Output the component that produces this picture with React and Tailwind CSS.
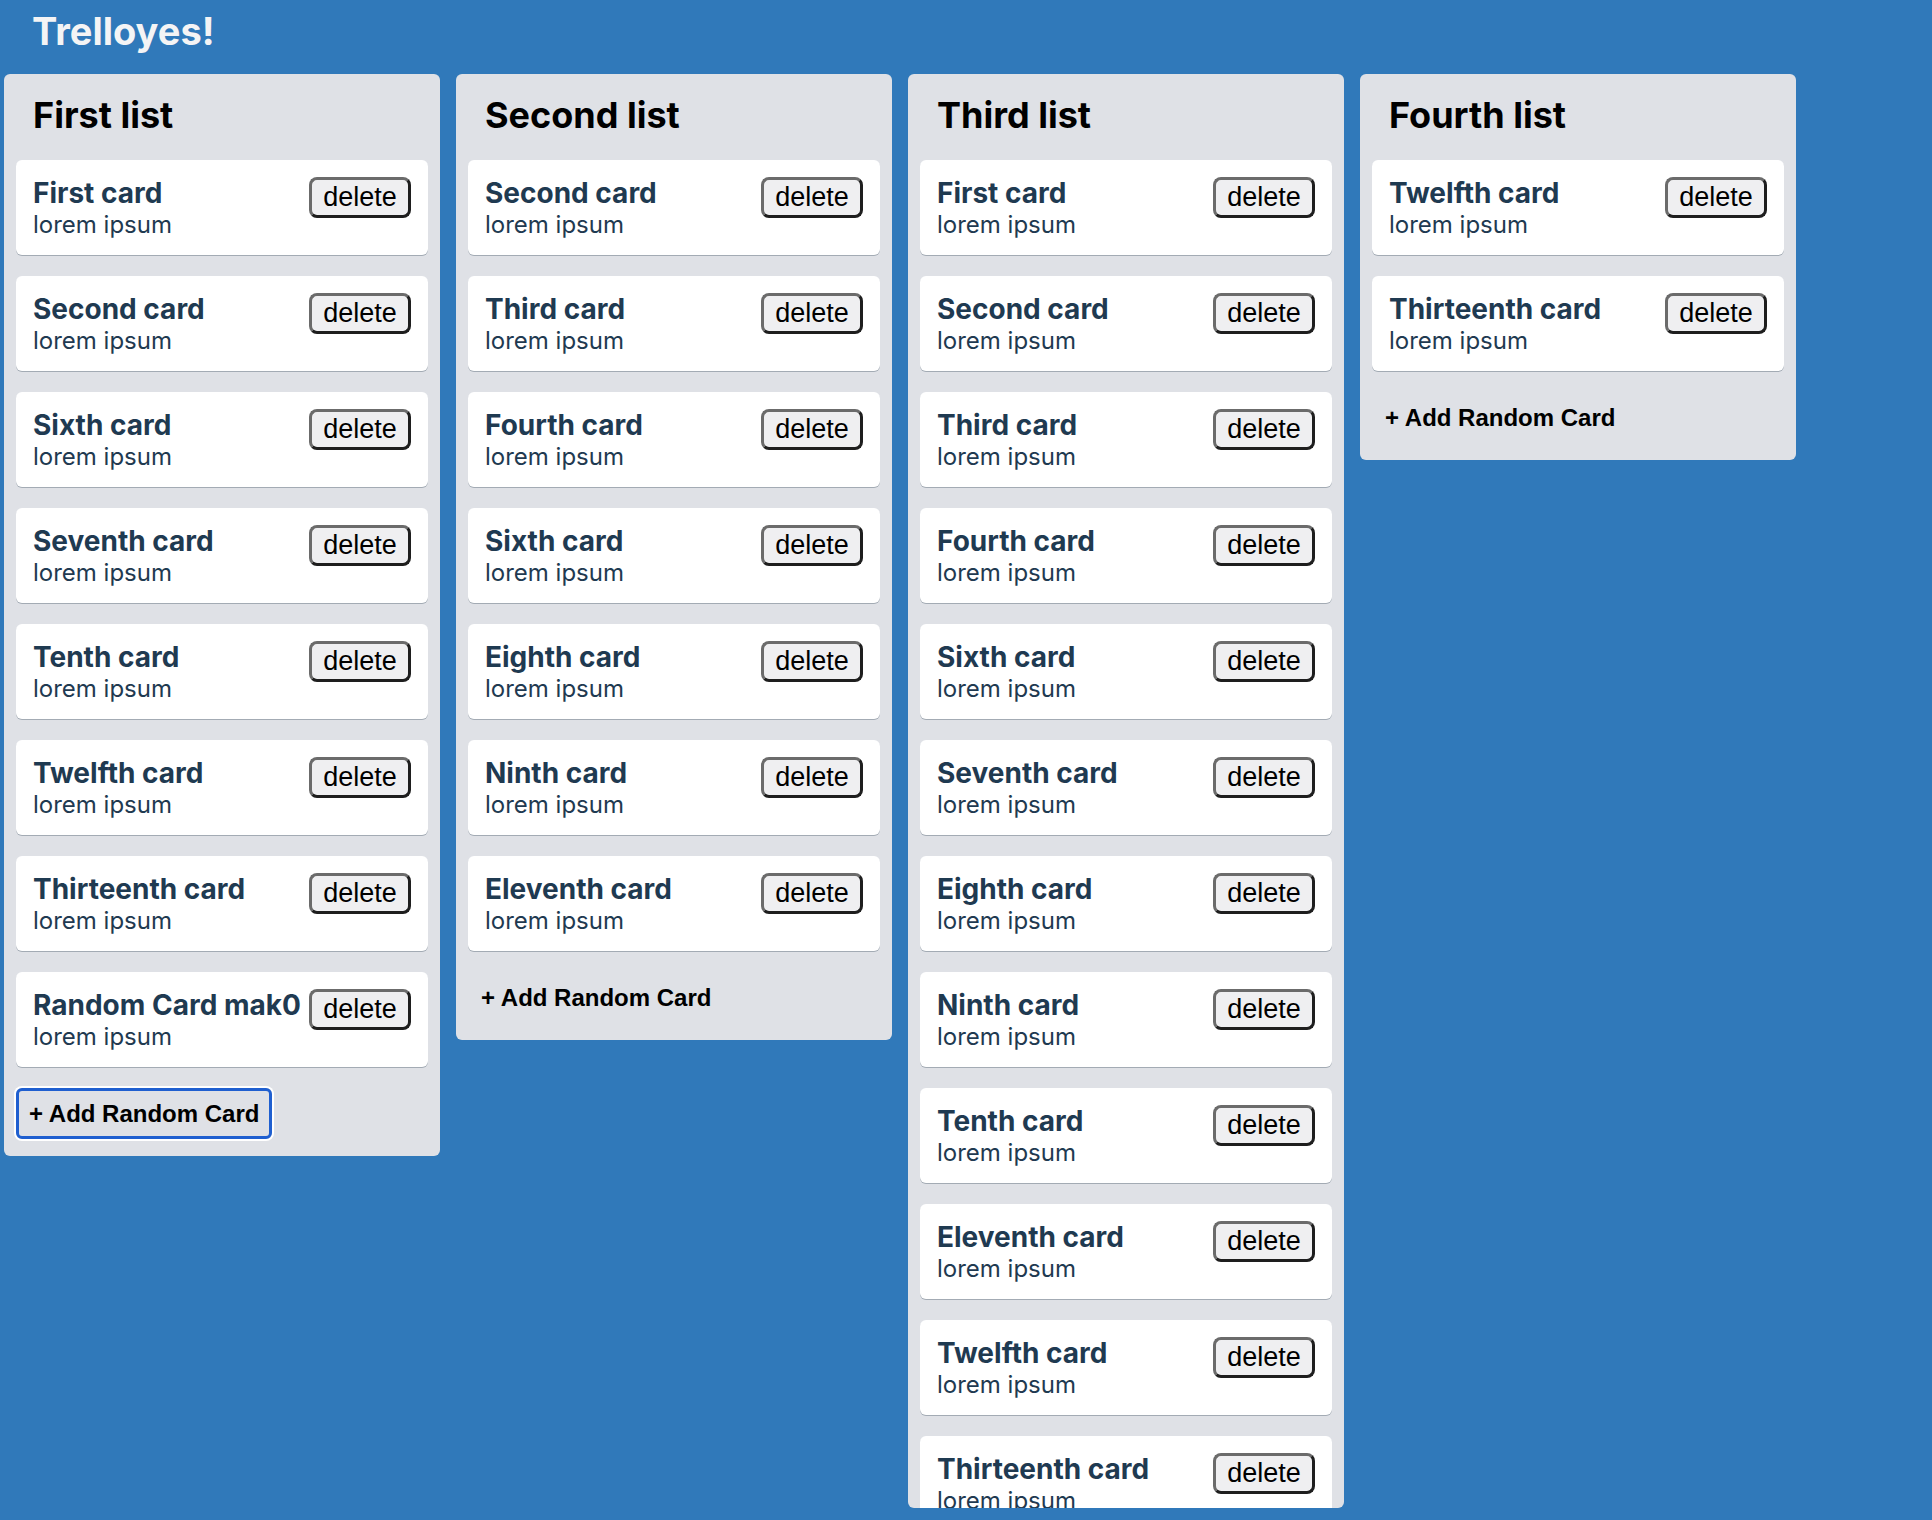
import React from "react";

const lists = [
  {
    title: "First list",
    focused: true,
    cards: [
      "First card",
      "Second card",
      "Sixth card",
      "Seventh card",
      "Tenth card",
      "Twelfth card",
      "Thirteenth card",
      "Random Card mak0",
    ],
  },
  {
    title: "Second list",
    cards: ["Second card", "Third card", "Fourth card", "Sixth card", "Eighth card", "Ninth card", "Eleventh card"],
  },
  {
    title: "Third list",
    cards: [
      "First card",
      "Second card",
      "Third card",
      "Fourth card",
      "Sixth card",
      "Seventh card",
      "Eighth card",
      "Ninth card",
      "Tenth card",
      "Eleventh card",
      "Twelfth card",
      "Thirteenth card",
    ],
  },
  {
    title: "Fourth list",
    cards: ["Twelfth card", "Thirteenth card"],
  },
];

const Card = ({ title }) => {
  return (
    <div className="mx-[12px] mb-[21px] flex h-[95px] shrink-0 items-start justify-between rounded-[6px] bg-white px-[17px] pt-[17px] shadow-[0_1px_0_#a3abb4]">
      <div className="text-[#1f3a51]">
        <h3 className="text-[28px] font-bold leading-[32px] whitespace-nowrap">{title}</h3>
        <p className="text-[24px] leading-[31px]">lorem ipsum</p>
      </div>
      <button
        type="button"
        className="h-[41px] w-[102px] shrink-0 rounded-[8px] border-[3px] border-t-[#6b6b6b] border-l-[#6b6b6b] border-r-[#1e1e1e] border-b-[#1e1e1e] bg-[#efeff1] text-[27px] leading-none text-black font-['Liberation_Sans',Arial,sans-serif]"
      >
        delete
      </button>
    </div>
  );
};

const List = ({ list }) => {
  return (
    <section className="flex max-h-[1434px] w-[436px] shrink-0 flex-col overflow-hidden rounded-[6px] bg-[#dfe1e6] pb-[17px]">
      <h2 className="shrink-0 px-[29px] pt-[20px] pb-[23px] text-[36px] font-bold leading-[43px] text-black">{list.title}</h2>
      {list.cards.map((c, i) => (
        <Card key={i} title={c} />
      ))}
      <div className="shrink-0">
        <button
          type="button"
          className={
            list.focused
              ? "ml-[12px] rounded-[6px] border-[3px] border-[#1f5fd0] px-[10px] py-[9px] text-[24px] font-bold leading-[27px] text-black font-['Liberation_Sans',Arial,sans-serif] shadow-[0_0_0_2px_#fff]"
              : "ml-[12px] rounded-[6px] border-[3px] border-transparent px-[10px] py-[9px] text-[24px] font-bold leading-[27px] text-black font-['Liberation_Sans',Arial,sans-serif]"
          }
        >
          + Add Random Card
        </button>
      </div>
    </section>
  );
};

export default function App() {
  return (
    <div className="min-h-[1520px] bg-[#3079ba] font-['Inter','Noto_Sans',sans-serif]">
      <h1 className="px-[32px] pt-[8px] pb-[19px] text-[38px] font-bold leading-[47px] text-[#f4f4f5]">Trelloyes!</h1>
      <div className="flex items-start gap-[16px] pl-[4px]">
        {lists.map((l, i) => (
          <List key={i} list={l} />
        ))}
      </div>
    </div>
  );
}
